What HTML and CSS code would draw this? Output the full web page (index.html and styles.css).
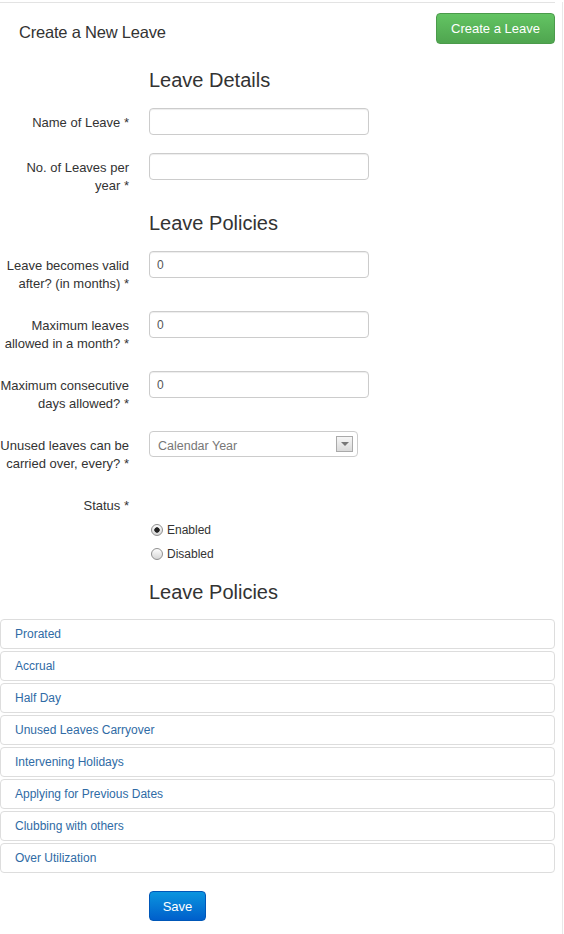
FILE: index.html
```html
<!DOCTYPE html>
<html lang="en">
<head>
<meta charset="utf-8">
<title>Create a New Leave</title>
<link rel="stylesheet" href="styles.css">
</head>
<body>
<div class="page">
  <header class="topbar">
    <h1 class="page-title">Create a New Leave</h1>
    <button type="button" class="btn btn-success">Create a Leave</button>
  </header>

  <form class="leave-form">
    <h2 class="section-title">Leave Details</h2>
    <div class="fields">
      <div class="row">
        <label class="row-label"><span>Name of Leave *</span></label>
        <input class="text-input" type="text">
      </div>
      <div class="row">
        <label class="row-label"><span>No. of Leaves per<br>year *</span></label>
        <input class="text-input" type="text">
      </div>
    </div>

    <h2 class="section-title">Leave Policies</h2>
    <div class="fields">
      <div class="row">
        <label class="row-label"><span>Leave becomes valid<br>after? (in months) *</span></label>
        <input class="text-input" type="text" value="0">
      </div>
      <div class="row">
        <label class="row-label"><span>Maximum leaves<br>allowed in a month? *</span></label>
        <input class="text-input" type="text" value="0">
      </div>
      <div class="row">
        <label class="row-label"><span>Maximum consecutive<br>days allowed? *</span></label>
        <input class="text-input" type="text" value="0">
      </div>
      <div class="row">
        <label class="row-label"><span>Unused leaves can be<br>carried over, every? *</span></label>
        <div class="select"><span class="select-value">Calendar Year</span><span class="select-arrow"></span></div>
      </div>
      <div class="row">
        <label class="row-label"><span>Status *</span></label>
        <div class="radios">
          <label class="radio"><input class="radio-input" type="radio" name="status" checked>Enabled</label>
          <label class="radio"><input class="radio-input" type="radio" name="status">Disabled</label>
        </div>
      </div>
    </div>

    <h2 class="section-title section-title--tight">Leave Policies</h2>
    <div class="panels">
      <div class="panel">Prorated</div>
      <div class="panel">Accrual</div>
      <div class="panel">Half Day</div>
      <div class="panel">Unused Leaves Carryover</div>
      <div class="panel">Intervening Holidays</div>
      <div class="panel">Applying for Previous Dates</div>
      <div class="panel">Clubbing with others</div>
      <div class="panel">Over Utilization</div>
    </div>

    <div class="actions">
      <button type="button" class="btn btn-primary">Save</button>
    </div>
  </form>
</div>
</body>
</html>
```

FILE: styles.css
```css
* {
  box-sizing: border-box;
}

body {
  margin: 0;
  font-family: "Liberation Sans", Arial, sans-serif;
  color: #333;
  background: #fff;
}

.page {
  width: 563px;
  min-height: 934px;
  padding-right: 7px;
  border-right: 1px solid #e8e8e8;
}

.topbar {
  margin-top: 2px;
  padding-top: 10px;
  border-top: 1px solid #e3e3e3;
  display: flex;
  justify-content: space-between;
  align-items: flex-start;
}

.page-title {
  margin: 7px 0 0 19px;
  font-family: "Liberation Sans", Arial, sans-serif;
  font-size: 16.5px;
  letter-spacing: -0.2px;
  font-weight: normal;
  line-height: 24px;
  color: #333;
}

.btn {
  font-family: "Liberation Sans", Arial, sans-serif;
  font-size: 13px;
  line-height: 17px;
  color: #fff;
  border-radius: 4px;
  padding: 0;
  cursor: pointer;
}

.btn-success {
  width: 119px;
  height: 31px;
  background: linear-gradient(#63c463, #4fa54f);
  border: 1px solid #4b9b4b;
}

.btn-primary {
  width: 57px;
  height: 30px;
  background: linear-gradient(#0b95df, #005fcb);
  border: 1px solid #0057b8;
}

.leave-form {
  margin-top: 24px;
}

.section-title {
  margin: 0 0 16px 149px;
  font-size: 20px;
  font-weight: normal;
  line-height: 24px;
  color: #333;
}

.section-title--tight {
  margin-bottom: 15px;
}

.fields {
  display: flex;
  flex-direction: column;
  gap: 18px;
  margin-bottom: 16px;
}

.row {
  display: grid;
  grid-template-columns: 129px 220px;
  column-gap: 20px;
  align-items: start;
}

.row-label {
  display: flex;
  justify-content: flex-end;
  padding-top: 6px;
  font-size: 13px;
  line-height: 18px;
  white-space: nowrap;
  text-align: right;
  color: #333;
}

.text-input {
  display: block;
  width: 220px;
  height: 27px;
  margin: 0;
  padding: 0 7px;
  border: 1px solid #ccc;
  border-radius: 4px;
  box-shadow: inset 0 1px 1px rgba(0, 0, 0, 0.075);
  font: 12px "Liberation Sans", Arial, sans-serif;
  color: #555;
}

.select {
  width: 209px;
  height: 26px;
  padding: 0 4px 0 8px;
  border: 1px solid #ccc;
  border-radius: 4px;
  display: flex;
  align-items: center;
  justify-content: space-between;
  font-size: 12.5px;
  color: #777;
}

.select-value {
  padding-top: 3px;
}

.select-arrow {
  width: 17px;
  height: 16px;
  border: 1px solid #aaa;
  background: linear-gradient(#f6f6f6, #dadada);
  display: flex;
  align-items: center;
  justify-content: center;
}

.select-arrow::after {
  content: "";
  border-left: 4px solid transparent;
  border-right: 4px solid transparent;
  border-top: 4px solid #777;
}

.radios {
  display: flex;
  flex-direction: column;
  gap: 4px;
  padding-top: 29px;
}

.radio {
  display: flex;
  align-items: center;
  gap: 4px;
  font-size: 12px;
  line-height: 20px;
  color: #333;
}

.radio-input {
  appearance: none;
  -webkit-appearance: none;
  margin: 0 0 0 2px;
  width: 12px;
  height: 12px;
  border-radius: 50%;
  border: 1px solid #8f8f8f;
  background: linear-gradient(#fdfdfd, #d6d6d6);
}

.radio-input:checked {
  background: radial-gradient(circle, #222 0, #222 2.4px, transparent 3px), linear-gradient(#fdfdfd, #d6d6d6);
}

.panels {
  display: flex;
  flex-direction: column;
  gap: 2px;
  width: 555px;
}

.panel {
  height: 30px;
  padding: 0 14px;
  border: 1px solid #ddd;
  border-radius: 4px;
  display: flex;
  align-items: center;
  font-size: 12px;
  color: #2f6ba5;
}

.actions {
  padding: 18px 0 0 149px;
}
```
